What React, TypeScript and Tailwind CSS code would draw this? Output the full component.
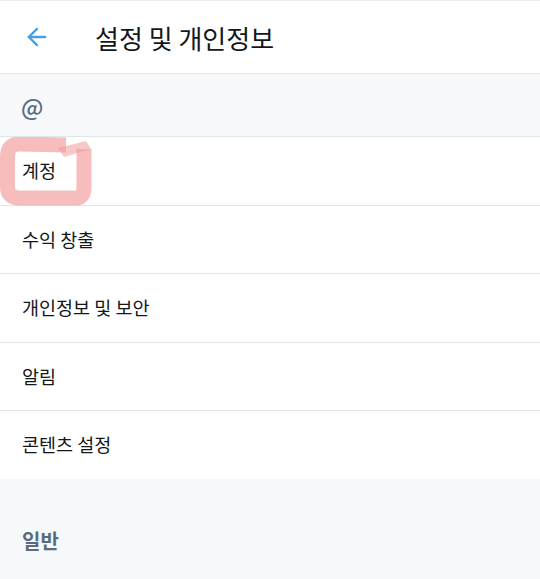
import { ArrowLeft } from 'lucide-react';

const ITEMS = [
  { label: '계정', h: 'h-[69px]' },
  { label: '수익 창출', h: 'h-[68px]' },
  { label: '개인정보 및 보안', h: 'h-[69px]' },
  { label: '알림', h: 'h-[68px]' },
  { label: '콘텐츠 설정', h: 'h-[68px]' },
];

function Marker() {
  return (
    <svg
      className="pointer-events-none absolute left-0 top-0"
      width="100"
      height="75"
      viewBox="0 0 100 75"
    >
      <path
        d="M66 8 L19 7 Q7.5 7 7.5 20 L7.5 50 Q7.5 61 20 61 L76 61 Q84 61 84 50 L84 12"
        fill="none"
        stroke="#f39a9a"
        strokeOpacity="0.65"
        strokeWidth="15"
        strokeLinecap="butt"
        strokeLinejoin="round"
      />
      <polygon points="58,11 86,4 91,12 64,20" fill="#f39a9a" fillOpacity="0.55" />
    </svg>
  );
}

export default function App() {
  return (
    <div
      className="flex h-[579px] w-[540px] flex-col overflow-hidden border-t border-[#ececec] bg-[#f6f8fa]"
      style={{ fontFamily: '"Noto Sans CJK KR", "Noto Sans", sans-serif' }}
    >
      {/* Header */}
      <div className="flex h-[73px] shrink-0 items-center border-b border-[#e1e6ea] bg-white">
        <ArrowLeft size={28} strokeWidth={2} className="ml-[23px] text-[#4a9fe0]" />
        <h1 className="ml-[44px] text-[26px] font-normal text-[#14171a]">설정 및 개인정보</h1>
      </div>

      {/* Account handle */}
      <div className="flex h-[63px] shrink-0 items-center border-b border-[#e1e6ea] px-[21px] pt-[2px] text-[23px] font-medium text-[#5b6b7c]">
        @
      </div>

      {/* Rows */}
      <div className="flex shrink-0 flex-col bg-white">
        {ITEMS.map((item, i) => (
          <div
            key={item.label}
            className={`relative flex ${item.h} items-center px-[22px] text-[18.5px] text-[#14171a] ${
              i < ITEMS.length - 1 ? 'border-b border-[#e1e6ea]' : ''
            }`}
          >
            {i === 0 && <Marker />}
            <span className="relative">{item.label}</span>
          </div>
        ))}
      </div>

      {/* General section */}
      <div className="px-[22px] pt-[47px] text-[20px] font-semibold text-[#5b6b7c]">일반</div>
    </div>
  );
}
